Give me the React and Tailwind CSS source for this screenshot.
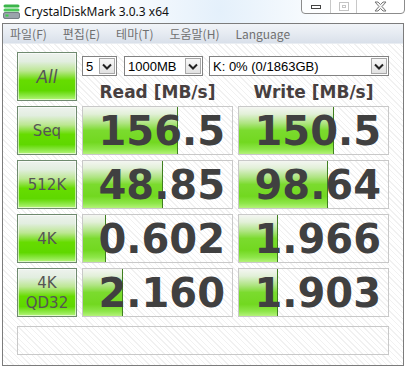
import React from "react";

const hatch =
  "bg-[repeating-linear-gradient(45deg,#ffffff_0px,#ffffff_3px,#f1f1f1_3px,#f1f1f1_4px)]";

function LabelBtn({ children, italic }) {
  return (
    <div
      className={`h-[49px] w-[60px] border border-[#6f8a6f] shadow-[inset_0_0_0_1px_rgba(255,255,255,0.6)] bg-[linear-gradient(180deg,#eef2ee_0%,#e2eee0_18%,#bce792_38%,#66dc00_58%,#5fd800_80%,#8fe94a_92%,#b8f57e_100%)] flex flex-col items-center justify-center text-[#555] text-[15px] leading-[20px] ${
        italic ? "italic text-[17px]" : ""
      }`}
      style={{ fontFamily: '"DejaVu Sans", sans-serif' }}
    >
      {children}
    </div>
  );
}

function Result({ value, bar }) {
  return (
    <div className={`relative h-[49px] w-[151px] border border-[#c9c9c9] ${hatch} overflow-hidden`}>
      <div
        className="absolute left-0 top-0 bottom-0 border-r border-[#3f7f1f] bg-[linear-gradient(180deg,#f4f6f2_0%,#e2f0d8_15%,#ade47f_35%,#7bdb2e_50%,#72d820_75%,#8ee64a_90%,#b4f27a_100%)]"
        style={{ width: bar }}
      />
      <div
        className="relative h-full flex items-center justify-end pr-[7px] text-[40px] font-bold leading-none text-[#404040]"
        style={{ fontFamily: '"DejaVu Sans", sans-serif' }}
      >
        {value}
      </div>
    </div>
  );
}

function DropArrow() {
  return (
    <div className="h-full w-[16px] border border-[#a8a8a8] bg-[linear-gradient(180deg,#f8f8f8,#e2e2e2)] flex items-center justify-center">
      <svg width="10" height="7" viewBox="0 0 10 7">
        <path d="M1 1.5 L5 5.5 L9 1.5" fill="none" stroke="#222" strokeWidth="2" />
      </svg>
    </div>
  );
}

function Select({ w, text }) {
  return (
    <div
      className="h-[20px] border border-[#828282] bg-white flex items-stretch p-[1px]"
      style={{ width: w }}
    >
      <div
        className="flex-1 flex items-center pl-[2px] text-[13px] text-black leading-none"
        style={{ fontFamily: '"Liberation Sans", sans-serif' }}
      >
        {text}
      </div>
      <DropArrow />
    </div>
  );
}

export default function App() {
  const rows = [
    { label: ["Seq"], r: "156.5", rb: 95, w: "150.5", wb: 95 },
    { label: ["512K"], r: "48.85", rb: 80, w: "98.64", wb: 89 },
    { label: ["4K"], r: "0.602", rb: 23, w: "1.966", wb: 39 },
    { label: ["4K", "QD32"], r: "2.160", rb: 40, w: "1.903", wb: 39 },
  ];
  return (
    <div className="w-[406px] h-[368px] bg-[radial-gradient(ellipse_at_220px_10px,#e4f0fb_0%,#ffffff_40%)] overflow-hidden flex flex-col">
      {/* title bar */}
      <div className="h-[23px] flex items-start justify-between">
        <div className="flex items-center h-[23px] pl-[3px]">
          <svg width="17" height="15" viewBox="0 0 17 15">
            <rect x="0.5" y="0.5" width="16" height="3" rx="1.5" fill="#3bb54a" />
            <rect x="0.5" y="4.5" width="16" height="3" rx="1.5" fill="#4cc85a" />
            <rect x="0.5" y="8.5" width="16" height="6" rx="1.5" fill="#9aa3ab" stroke="#5e6870" strokeWidth="0.8" />
            <rect x="2.5" y="10.5" width="3" height="2" fill="#3bd04a" />
          </svg>
          <span
            className="ml-[4px] text-[12px] text-[#111] leading-none"
            style={{ fontFamily: '"Noto Sans", sans-serif' }}
          >
            CrystalDiskMark 3.0.3 x64
          </span>
        </div>
        <div className="flex h-[15px] mr-[1px] -mt-[1px] border border-[#8c8c8c] rounded-b-[4px] bg-white/70 overflow-hidden">
          <div className="w-[29px] flex items-center justify-center border-r border-[#c8c8c8]">
            <div className="w-[10px] h-[4px] border border-[#444] bg-white" />
          </div>
          <div className="w-[26px] flex items-center justify-center border-r border-[#c8c8c8]">
            <div className="w-[10px] h-[9px] border border-[#c4c4c4] flex items-center justify-center">
              <div className="w-[4px] h-[3px] border border-[#c4c4c4]" />
            </div>
          </div>
          <div className="w-[47px] flex items-center justify-center">
            <svg width="13" height="11" viewBox="0 0 13 11">
              <path
                d="M1 1 H4 L6.5 3.5 L9 1 H12 L8 5.5 L12 10 H9 L6.5 7.5 L4 10 H1 L5 5.5 Z"
                fill="#f4f4f4"
                stroke="#777"
                strokeWidth="1"
              />
            </svg>
          </div>
        </div>
      </div>
      {/* window body */}
      <div className="mx-[2px] w-[402px] h-[343px] border border-[#7c7c7c] flex flex-col">
        <div
          className="h-[20px] flex items-center gap-[16px] pl-[7px] bg-[linear-gradient(180deg,#f1f4f8_0%,#e6ebf2_50%,#d9e0ea_100%)] border-b border-[#e9edf2] text-[12px] text-[#707070]"
          style={{ fontFamily: '"Noto Sans CJK KR", "Noto Sans", sans-serif' }}
        >
          <span>파일(F)</span>
          <span>편집(E)</span>
          <span>테마(T)</span>
          <span>도움말(H)</span>
          <span>Language</span>
        </div>
        <div className={`flex-1 ${hatch} pl-[14px] pt-[8px] flex flex-col`}>
          <div className="flex gap-[5px]">
            <LabelBtn italic>All</LabelBtn>
            <div className="flex flex-col w-[307px]">
              <div className="flex mt-[4px] gap-[7px]">
                <Select w={35} text="5" />
                <div className="w-[79px]">
                  <Select w={79} text="1000MB" />
                </div>
                <div className="ml-[-1px]">
                  <Select w={180} text="K: 0% (0/1863GB)" />
                </div>
              </div>
              <div
                className="mt-[7px] flex gap-[5px] text-[17px] font-bold text-[#473f3f] leading-[18px]"
                style={{ fontFamily: '"DejaVu Sans", sans-serif' }}
              >
                <div className="w-[151px] text-center">Read [MB/s]</div>
                <div className="w-[151px] text-center">Write [MB/s]</div>
              </div>
            </div>
          </div>
          {rows.map((row, i) => (
            <div key={i} className="flex gap-[5px] mt-[5px]">
              <LabelBtn>
                {row.label.map((l) => (
                  <span key={l}>{l}</span>
                ))}
              </LabelBtn>
              <Result value={row.r} bar={row.rb} />
              <Result value={row.w} bar={row.wb} />
            </div>
          ))}
          <div className={`mt-[9px] w-[372px] h-[29px] border border-[#c9c9c9] ${hatch}`} />
        </div>
      </div>
    </div>
  );
}
